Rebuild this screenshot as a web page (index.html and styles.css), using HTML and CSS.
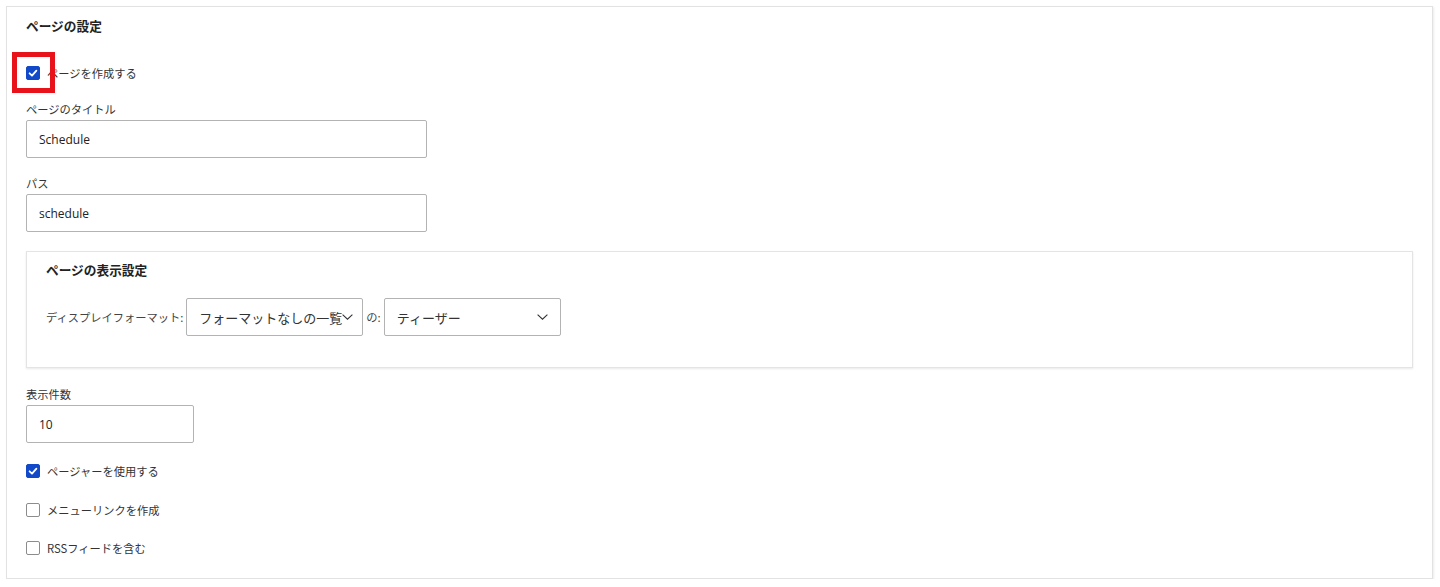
FILE: index.html
```html
<!DOCTYPE html>
<html lang="ja">
<head>
<meta charset="utf-8">
<title>ページの設定</title>
<link rel="stylesheet" href="styles.css">
</head>
<body>
<section class="card">
  <h2 class="card-title">ページの設定</h2>

  <div class="check-row first-check">
    <span class="checkbox checked">
      <svg viewBox="0 0 14 14" width="14" height="14"><polyline points="3.6,7.3 6,9.6 10.4,4.6" fill="none" stroke="#fff" stroke-width="1.8" stroke-linecap="round" stroke-linejoin="round"/></svg>
    </span>
    <span class="check-label">ページを作成する</span>
    <span class="highlight"></span>
  </div>

  <div class="field">
    <label class="field-label">ページのタイトル</label>
    <div class="input wide">Schedule</div>
  </div>

  <div class="field">
    <label class="field-label">パス</label>
    <div class="input wide">schedule</div>
  </div>

  <section class="subcard">
    <h3 class="card-title">ページの表示設定</h3>
    <div class="format-row">
      <span class="inline-label">ディスプレイフォーマット:</span>
      <div class="select">
        <span>フォーマットなしの一覧</span>
        <svg class="chev" viewBox="0 0 11 6" width="11" height="6"><polyline points="0.6,0.6 5.5,5.2 10.4,0.6" fill="none" stroke="#333" stroke-width="1.1"/></svg>
      </div>
      <span class="inline-label">の:</span>
      <div class="select">
        <span>ティーザー</span>
        <svg class="chev" viewBox="0 0 11 6" width="11" height="6"><polyline points="0.6,0.6 5.5,5.2 10.4,0.6" fill="none" stroke="#333" stroke-width="1.1"/></svg>
      </div>
    </div>
  </section>

  <div class="field count-field">
    <label class="field-label">表示件数</label>
    <div class="input narrow">10</div>
  </div>

  <div class="check-list">
    <div class="check-row">
      <span class="checkbox checked">
        <svg viewBox="0 0 14 14" width="14" height="14"><polyline points="3.6,7.3 6,9.6 10.4,4.6" fill="none" stroke="#fff" stroke-width="1.8" stroke-linecap="round" stroke-linejoin="round"/></svg>
      </span>
      <span class="check-label">ページャーを使用する</span>
    </div>
    <div class="check-row">
      <span class="checkbox"></span>
      <span class="check-label">メニューリンクを作成</span>
    </div>
    <div class="check-row">
      <span class="checkbox"></span>
      <span class="check-label">RSSフィードを含む</span>
    </div>
  </div>
</section>
</body>
</html>
```

FILE: styles.css
```css
* { box-sizing: border-box; }

html, body {
  margin: 0;
  padding: 0;
  background: #ffffff;
}

body {
  font-family: "Open Sans", "Noto Sans CJK JP", sans-serif;
  color: #333;
  padding: 6px 7px 0 6px;
}

.card {
  border: 1px solid #e2e2e2;
  box-shadow: 1px 1px 2px rgba(0, 0, 0, 0.08);
  background: #fff;
  padding: 10px 19px 20px 19px;
  display: flex;
  flex-direction: column;
  align-items: flex-start;
}

.card-title {
  margin: 0;
  font-size: 12.7px;
  line-height: 18px;
  font-weight: 700;
  color: #222;
  font-family: "Noto Sans CJK JP", sans-serif;
}

.check-row {
  position: relative;
  display: flex;
  align-items: center;
  height: 20px;
}

.first-check {
  margin-top: 28px;
}

.checkbox {
  width: 14px;
  height: 14px;
  border: 1px solid #8c8c8c;
  border-radius: 2px;
  background: #fff;
  flex: none;
  display: flex;
}

.checkbox.checked {
  background: #1249c8;
  border-color: #1249c8;
}

.checkbox.checked svg {
  margin: -1px;
}

.check-label {
  margin-left: 7px;
  font-size: 11.25px;
  line-height: 16px;
  color: #333;
  font-family: "Noto Sans CJK JP", sans-serif;
}

.highlight {
  position: absolute;
  left: -14px;
  top: -11px;
  width: 43px;
  height: 41px;
  border: 5px solid #e8121b;
}

.field {
  display: flex;
  flex-direction: column;
  margin-top: 18px;
}

.field + .field {
  margin-top: 17px;
}

.field-label {
  font-size: 11.25px;
  line-height: 16px;
  color: #333;
  font-family: "Noto Sans CJK JP", sans-serif;
}

.input {
  margin-top: 3px;
  height: 38px;
  border: 1px solid #b3b3b3;
  border-radius: 2px;
  padding: 0 12px;
  display: flex;
  align-items: center;
  font-size: 12px;
  color: #222;
}

.input.wide { width: 401px; }
.input.narrow { width: 168px; }

.subcard {
  margin-top: 19px;
  width: 100%;
  border: 1px solid #e4e4e4;
  box-shadow: 0 1px 2px rgba(0, 0, 0, 0.09);
  padding: 9px 19px 31px 19px;
}

.format-row {
  margin-top: 19px;
  display: flex;
  align-items: center;
  gap: 3px;
}

.inline-label {
  font-size: 11.25px;
  line-height: 16px;
  color: #444;
  font-family: "Noto Sans CJK JP", sans-serif;
}

.select {
  width: 177px;
  height: 38px;
  border: 1px solid #b3b3b3;
  border-radius: 2px;
  padding: 0 12px 0 12px;
  display: flex;
  align-items: center;
  justify-content: space-between;
  font-size: 13px;
  color: #333;
  font-family: "Noto Sans CJK JP", sans-serif;
  white-space: nowrap;
  overflow: hidden;
}

.select .chev { flex: none; }

.count-field {
  margin-top: 18px;
}

.check-list {
  margin-top: 18px;
  display: flex;
  flex-direction: column;
  gap: 18.5px;
}
```
